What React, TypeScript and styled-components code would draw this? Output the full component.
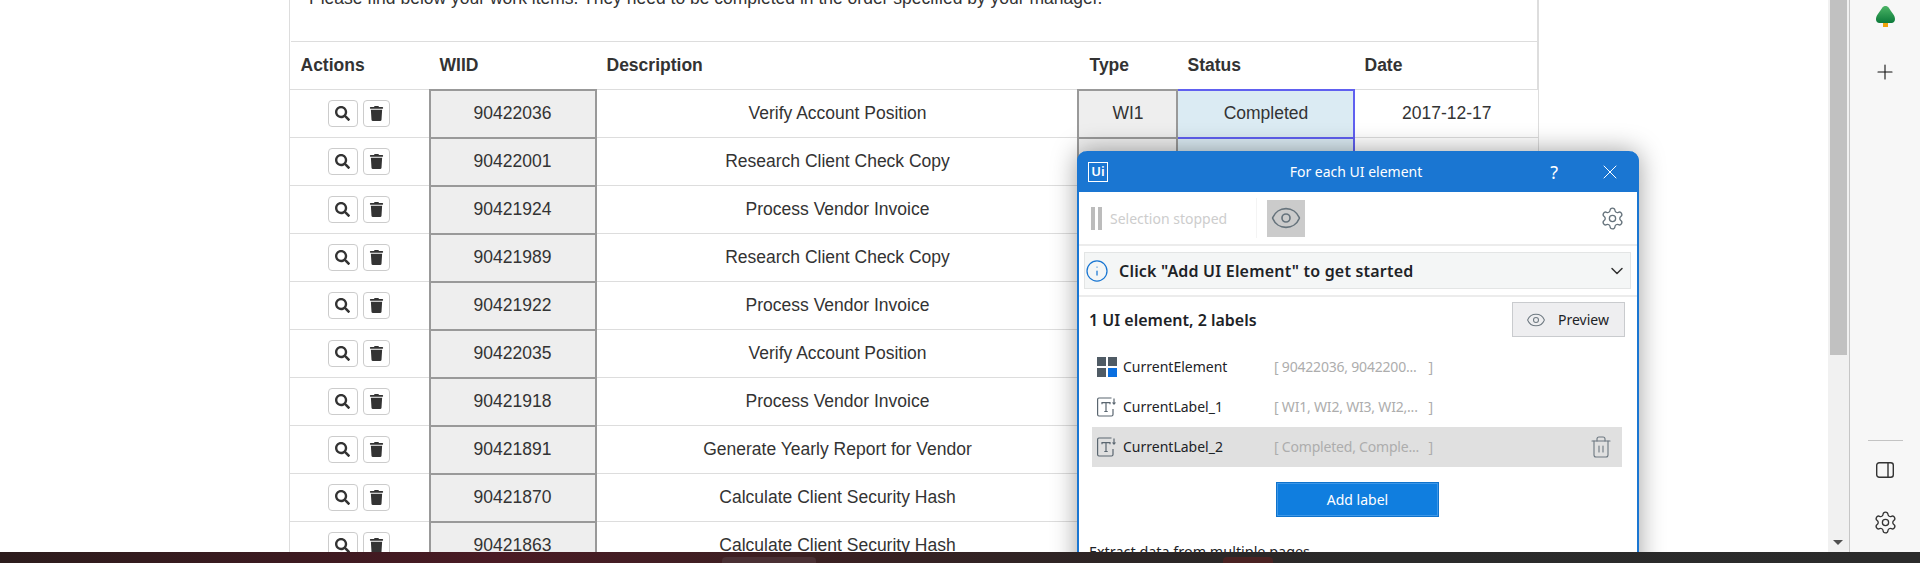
import React from "react";
import styled, { createGlobalStyle } from "styled-components";
import { FaSearch, FaTrash } from "react-icons/fa";
import { ChevronDown, Eye, Info, Plus, Settings, Trash2, X } from "lucide-react";

const Global = createGlobalStyle`
  html, body { margin: 0; padding: 0; background: #fff; }
  body { font-family: "Liberation Sans", Arial, sans-serif; }
  * { box-sizing: border-box; }
`;

const Page = styled.div`
  width: 1920px;
  height: 563px;
  display: flex;
  flex-direction: column;
  overflow: hidden;
`;
const Workspace = styled.div`
  flex: 1;
  min-height: 0;
  display: flex;
`;
const Main = styled.main`
  position: relative;
  flex: 1;
  min-width: 0;
  overflow: hidden;
  background: #fff;
`;
const Panel = styled.section`
  width: 1250px;
  margin: -20px 0 0 289px;
  border-left: 1px solid #ddd;
  border-right: 2px solid #ddd;
  color: #333;
  font-size: 17.5px;
`;
const Intro = styled.p`
  margin: 0;
  height: 61px;
  padding: 7px 19px 0;
  line-height: 22px;
  white-space: nowrap;
`;
const Table = styled.table`
  width: 1247px;
  table-layout: fixed;
  border-collapse: collapse;
`;
const HeadRow = styled.tr`
  height: 48px;
`;
const Row = styled.tr`
  height: 48px;
`;
const Th = styled.th<{ $inset?: number }>`
  padding: 0 10px 0 ${(p) => p.$inset ?? 10}px;
  text-align: left;
  font-weight: 700;
  font-size: 17.5px;
  border-top: 1px solid #ddd;
  border-bottom: 1px solid #ddd;
`;
const Td = styled.td<{ $tone?: "id" | "status"; $shift?: boolean }>`
  padding: 0 10px 0 ${(p) => (p.$shift ? 12 : 10)}px;
  text-align: center;
  font-size: 17.5px;
  border: ${(p) =>
    p.$tone === "id"
      ? "2px solid #999"
      : p.$tone === "status"
        ? "2px solid #6060f0"
        : "1px solid #ddd"};
  border-left-color: ${(p) => (p.$tone ? undefined : "transparent")};
  border-right-color: ${(p) => (p.$tone ? undefined : "transparent")};
  background: ${(p) =>
    p.$tone === "id" ? "#eee" : p.$tone === "status" ? "#dbebf3" : "#fff"};
`;
const Actions = styled.div`
  display: flex;
  justify-content: center;
  gap: 5px;
  padding-right: 2px;
`;
const IconButton = styled.button<{ $wide?: boolean }>`
  width: ${(p) => (p.$wide ? 30 : 27)}px;
  height: 27px;
  padding: 0;
  display: flex;
  align-items: center;
  justify-content: center;
  border: 1px solid #ccc;
  border-radius: 4px;
  background: #fff;
  color: #333;
`;

const Scrollbar = styled.div`
  width: 21px;
  display: flex;
  flex-direction: column;
  padding: 0 2px 0 2px;
  background: #f1f1f1;
`;
const Thumb = styled.div`
  height: 355px;
  background: #c1c1c1;
`;
const ScrollArrow = styled.div`
  margin: auto 0 7px 3px;
  width: 0;
  height: 0;
  border-left: 5px solid transparent;
  border-right: 5px solid transparent;
  border-top: 5px solid #505050;
`;
const Sidebar = styled.aside`
  width: 71px;
  display: flex;
  flex-direction: column;
  align-items: center;
  padding: 5px 0 17px;
  border-left: 1px solid #c6c6c6;
  background: #f7f7f7;
  color: #333;
`;
const SideAdd = styled.div`
  margin-top: 33px;
  display: flex;
  color: #111;
`;
const SideRule = styled.div`
  margin-top: auto;
  width: 35px;
  height: 1px;
  background: #c4c4c4;
`;
const SidePanelIcon = styled.div`
  margin-top: 21px;
  display: flex;
`;
const SideGear = styled.div`
  margin-top: 32px;
  display: flex;
`;

const Taskbar = styled.footer`
  height: 11px;
  display: flex;
  align-items: flex-end;
  background: linear-gradient(90deg, #2c1c1c 0%, #3c1a20 15%, #4a1b24 26%, #3b2022 42%, #2c2525 58%, #2a2a2a 72%, #2b2b2b 100%);
`;
const TaskbarTab = styled.div<{ $left: number; $width: number; $color: string }>`
  margin-left: ${(p) => p.$left}px;
  width: ${(p) => p.$width}px;
  height: 6px;
  border-radius: 4px 4px 0 0;
  background: ${(p) => p.$color};
`;

const Dialog = styled.div`
  position: absolute;
  left: 1077px;
  top: 151px;
  width: 562px;
  height: 440px;
  display: flex;
  flex-direction: column;
  border-radius: 10px 10px 0 0;
  border: 2px solid #1a76d2;
  border-top: 0;
  background: #fff;
  box-shadow: 0 0 26px rgba(0, 0, 0, 0.38);
  font-family: "Noto Sans", "Open Sans", sans-serif;
  font-size: 14px;
  color: #1d2327;
`;
const TitleBar = styled.header`
  height: 41px;
  flex: none;
  display: grid;
  grid-template-columns: 1fr auto 1fr;
  align-items: center;
  margin: 0 -2px;
  padding: 0 17px 0 11px;
  border-radius: 10px 10px 0 0;
  background: #1a76d2;
  color: #fff;
`;
const Logo = styled.div`
  width: 20px;
  height: 20px;
  border: 1.5px solid #fff;
  display: flex;
  align-items: center;
  justify-content: center;
  font-size: 13px;
  font-weight: 600;
  line-height: 1;
`;
const Title = styled.div`
  font-size: 14px;
  padding-left: 2px;
`;
const TitleTools = styled.div`
  display: flex;
  align-items: center;
  justify-content: flex-end;
  gap: 40px;
`;
const Help = styled.span`
  font-size: 18px;
  line-height: 1;
`;
const Toolbar = styled.div`
  height: 54px;
  flex: none;
  display: flex;
  align-items: center;
  padding: 0 12px 0 12px;
  border-bottom: 2px solid #ececec;
`;
const PauseBars = styled.div`
  display: flex;
  gap: 3px;
`;
const PauseBar = styled.span`
  width: 4px;
  height: 23px;
  background: #bcbcbc;
`;
const Stopped = styled.span`
  margin-left: 8px;
  width: 146px;
  font-size: 14px;
  color: #cdcdcd;
`;
const ToolDivider = styled.span`
  width: 1px;
  height: 40px;
  background: #f4f4f4;
`;
const EyeToggle = styled.div`
  margin-left: 10px;
  width: 38px;
  height: 37px;
  display: flex;
  align-items: center;
  justify-content: center;
  background: #cbcbcb;
  color: #66737c;
`;
const ToolGear = styled.div`
  margin-left: auto;
  display: flex;
  color: #66737c;
`;
const InfoBand = styled.div`
  flex: none;
  height: 37px;
  margin: 6px 6px 0 5px;
  display: flex;
  align-items: center;
  padding: 0 3px 0 0;
  border: 1px solid #e3e5e5;
  background: #f4f6f6;
  color: #1976d2;
`;
const InfoText = styled.span`
  margin-left: 10px;
  font-size: 16px;
  font-weight: 600;
  letter-spacing: 0.2px;
  color: #1d2327;
`;
const InfoChevron = styled.div`
  margin-left: auto;
  display: flex;
  color: #333;
`;
const Content = styled.div`
  flex: none;
  margin-top: 6px;
  padding: 5px 11px 0 10px;
  border-top: 2px solid #ececec;
`;
const SummaryRow = styled.div`
  display: flex;
  align-items: center;
  justify-content: space-between;
  height: 35px;
`;
const Summary = styled.h2`
  margin: 0;
  font-size: 16px;
  font-weight: 600;
`;
const PreviewButton = styled.button`
  width: 113px;
  height: 35px;
  margin-right: 1px;
  padding: 0 0 0 13px;
  display: flex;
  align-items: center;
  gap: 12px;
  border: 1px solid #c9cbce;
  background: #eeeef0;
  font: inherit;
  font-size: 14px;
  color: #1d2327;
`;
const PreviewEye = styled.span`
  display: flex;
  color: #6f7a82;
`;
const ElementList = styled.ul`
  list-style: none;
  margin: 10px 0 0;
  padding: 0 4px 0 3px;
`;
const ElementRow = styled.li<{ $selected?: boolean }>`
  height: 40px;
  display: flex;
  align-items: center;
  padding-left: 5px;
  background: ${(p) => (p.$selected ? "#e0e0e0" : "transparent")};
`;
const ElementIcon = styled.span`
  width: 20px;
  display: flex;
`;
const ElementName = styled.span`
  margin: 0 0 2px 6px;
  width: 151px;
  font-size: 14px;
`;
const ElementValue = styled.span`
  width: 159px;
  margin-bottom: 2px;
  display: flex;
  justify-content: space-between;
  font-size: 14px;
  letter-spacing: -0.2px;
  white-space: nowrap;
  color: #adadad;
`;
const RowTrash = styled.span`
  margin-left: auto;
  margin-right: 9px;
  display: flex;
  color: #6c7780;
`;
const AddLabel = styled.button`
  display: block;
  width: 163px;
  height: 35px;
  margin: 15px 0 0 187px;
  border: 1px solid #0f73cc;
  outline: 1px solid #3d97e8;
  outline-offset: -2px;
  background: #107edf;
  color: #fff;
  font: inherit;
  font-size: 14px;
`;
const Extract = styled.p`
  margin: 26px 0 0;
  font-size: 14.4px;
  line-height: 18px;
`;

const rows: { id: string; d: string; type?: string; status?: string; date?: string }[] = [
  { id: "90422036", d: "Verify Account Position", type: "WI1", status: "Completed", date: "2017-12-17" },
  { id: "90422001", d: "Research Client Check Copy" },
  { id: "90421924", d: "Process Vendor Invoice" },
  { id: "90421989", d: "Research Client Check Copy" },
  { id: "90421922", d: "Process Vendor Invoice" },
  { id: "90422035", d: "Verify Account Position" },
  { id: "90421918", d: "Process Vendor Invoice" },
  { id: "90421891", d: "Generate Yearly Report for Vendor" },
  { id: "90421870", d: "Calculate Client Security Hash" },
  { id: "90421863", d: "Calculate Client Security Hash" },
];

const LabelGlyph = () => (
  <svg width="20" height="20" viewBox="0 0 20 20" fill="none" stroke="#5a6670" strokeWidth="1.2">
    <path d="M14.500 1H2A1.500 1.500 0 0 0 .6 2.500v15A1.500 1.500 0 0 0 2 19h12.500a1.500 1.500 0 0 0 1.500-1.500V12" />
    <path d="M5 7.200V5.700h8v1.500M9 5.700v8.800M7.300 14.500h3.400" />
    <path d="M17 1.500v5" />
    <path d="M14.900 5.500l2.100 2.400 2.100-2.400z" fill="#5a6670" stroke="none" />
  </svg>
);

const GridGlyph = () => (
  <svg width="20" height="20" viewBox="0 0 20 20">
    <rect x="0" y="0" width="9" height="9" fill="#4f5b65" />
    <rect x="11" y="0" width="9" height="9" fill="#4f5b65" />
    <rect x="0" y="11" width="9" height="9" fill="#4f5b65" />
    <rect x="11" y="11" width="9" height="9" fill="#0a6fe0" />
  </svg>
);

const TreeGlyph = () => (
  <svg width="21" height="22" viewBox="0 0 21 22">
    <defs>
      <linearGradient id="treeFill" x1="0" y1="0" x2="0" y2="1">
        <stop offset="0" stopColor="#4cb566" />
        <stop offset="1" stopColor="#0c7a3a" />
      </linearGradient>
    </defs>
    <rect x="8" y="16" width="5" height="6" fill="#f0a30a" />
    <path d="M7.400 2.400C9 .4 12 .4 13.600 2.400c1.400 1.800 2.500 4 4.300 6.300C21 12.200 20.800 18 16.500 18h-12C.2 18 0 12.200 3.100 8.700c1.800-2.300 2.900-4.500 4.300-6.300z" fill="url(#treeFill)" />
  </svg>
);

const PanelGlyph = () => (
  <svg width="18" height="16" viewBox="0 0 18 16" fill="none" stroke="#333" strokeWidth="1.4">
    <rect x="0.700" y="0.700" width="16.600" height="14.600" rx="2.500" />
    <path d="M12 1v14" />
  </svg>
);

export default function App() {
  return (
    <Page>
      <Global />
      <Workspace>
        <Main>
          <Panel>
            <Intro>
              Please find below your work items. They need to be completed in the order specified by your manager.
            </Intro>
            <Table>
              <colgroup>
                <col style={{ width: 139 }} />
                <col style={{ width: 166 }} />
                <col style={{ width: 482 }} />
                <col style={{ width: 99 }} />
                <col style={{ width: 177 }} />
                <col style={{ width: 184 }} />
              </colgroup>
              <thead>
                <HeadRow>
                  <Th>Actions</Th>
                  <Th>WIID</Th>
                  <Th $inset={11}>Description</Th>
                  <Th $inset={12}>Type</Th>
                  <Th $inset={11}>Status</Th>
                  <Th $inset={11}>Date</Th>
                </HeadRow>
              </thead>
              <tbody>
                {rows.map((r) => (
                  <Row key={r.id}>
                    <Td>
                      <Actions>
                        <IconButton $wide aria-label="View">
                          <FaSearch size={15} />
                        </IconButton>
                        <IconButton aria-label="Delete">
                          <FaTrash size={15} />
                        </IconButton>
                      </Actions>
                    </Td>
                    <Td $tone="id">{r.id}</Td>
                    <Td $shift>{r.d}</Td>
                    <Td $tone="id" $shift>{r.type}</Td>
                    <Td $tone="status" $shift>{r.status}</Td>
                    <Td $shift>{r.date}</Td>
                  </Row>
                ))}
              </tbody>
            </Table>
          </Panel>

          <Dialog>
            <TitleBar>
              <Logo>Ui</Logo>
              <Title>For each UI element</Title>
              <TitleTools>
                <Help>?</Help>
                <X size={24} strokeWidth={1} />
              </TitleTools>
            </TitleBar>
            <Toolbar>
              <PauseBars>
                <PauseBar />
                <PauseBar />
              </PauseBars>
              <Stopped>Selection stopped</Stopped>
              <ToolDivider />
              <EyeToggle>
                <Eye size={32} strokeWidth={1.25} />
              </EyeToggle>
              <ToolGear>
                <Settings size={25} strokeWidth={1.25} />
              </ToolGear>
            </Toolbar>
            <InfoBand>
              <Info size={24} strokeWidth={1.25} />
              <InfoText>Click "Add UI Element" to get started</InfoText>
              <InfoChevron>
                <ChevronDown size={20} strokeWidth={1.8} />
              </InfoChevron>
            </InfoBand>
            <Content>
              <SummaryRow>
                <Summary>1 UI element, 2 labels</Summary>
                <PreviewButton>
                  <PreviewEye>
                    <Eye size={20} strokeWidth={1.25} />
                  </PreviewEye>
                  Preview
                </PreviewButton>
              </SummaryRow>
              <ElementList>
                <ElementRow>
                  <ElementIcon>
                    <GridGlyph />
                  </ElementIcon>
                  <ElementName>CurrentElement</ElementName>
                  <ElementValue>
                    <span>[ 90422036, 9042200...</span>
                    <span>]</span>
                  </ElementValue>
                </ElementRow>
                <ElementRow>
                  <ElementIcon>
                    <LabelGlyph />
                  </ElementIcon>
                  <ElementName>CurrentLabel_1</ElementName>
                  <ElementValue>
                    <span>[ WI1, WI2, WI3, WI2,...</span>
                    <span>]</span>
                  </ElementValue>
                </ElementRow>
                <ElementRow $selected>
                  <ElementIcon>
                    <LabelGlyph />
                  </ElementIcon>
                  <ElementName>CurrentLabel_2</ElementName>
                  <ElementValue>
                    <span>[ Completed, Comple...</span>
                    <span>]</span>
                  </ElementValue>
                  <RowTrash>
                    <Trash2 size={24} strokeWidth={1.1} />
                  </RowTrash>
                </ElementRow>
              </ElementList>
              <AddLabel>Add label</AddLabel>
              <Extract>Extract data from multiple pages</Extract>
            </Content>
          </Dialog>
        </Main>
        <Scrollbar>
          <Thumb />
          <ScrollArrow />
        </Scrollbar>
        <Sidebar>
          <TreeGlyph />
          <SideAdd>
            <Plus size={24} strokeWidth={1.1} />
          </SideAdd>
          <SideRule />
          <SidePanelIcon>
            <PanelGlyph />
          </SidePanelIcon>
          <SideGear>
            <Settings size={25} strokeWidth={1.25} />
          </SideGear>
        </Sidebar>
      </Workspace>
      <Taskbar>
        <TaskbarTab $left={722} $width={94} $color="#4a3034" />
        <TaskbarTab $left={407} $width={50} $color="#4a2222" />
      </Taskbar>
    </Page>
  );
}
